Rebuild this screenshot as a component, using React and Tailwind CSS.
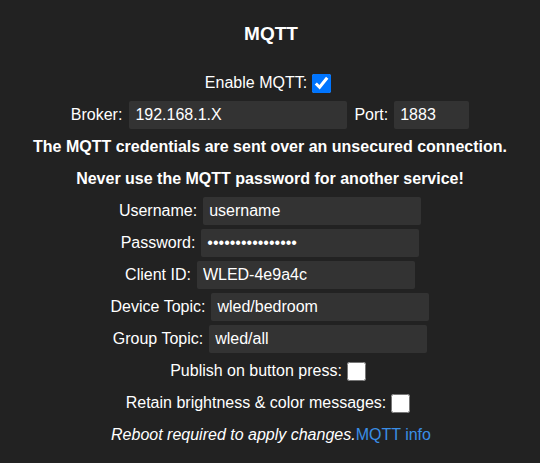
const Field = ({ label, value, type = 'text', width = 'w-[218px]' }) => (
  <div className="h-[32px] flex items-center justify-center">
    <span>{label}</span>
    <input
      type={type}
      defaultValue={value}
      className={`${width} h-[28px] ml-[6px] px-[6px] bg-[#333] text-white rounded-[2px] outline-none`}
    />
  </div>
);

const Check = ({ label, checked }) => (
  <div className="h-[32px] flex items-center justify-center">
    <span>{label}</span>
    <input type="checkbox" defaultChecked={checked} className="w-[19px] h-[19px] m-0 ml-[5px] mr-[4px]" />
  </div>
);

export default function App() {
  return (
    <div
      className="min-h-[463px] pt-[1px] bg-[#222] text-white text-[16px]"
      style={{ fontFamily: '"Liberation Sans", Arial, sans-serif' }}
    >
      {/* Title */}
      <div className="h-[66px] pt-[1px] pl-[2px] flex items-center justify-center">
        <h2 className="text-[19px] font-bold">MQTT</h2>
      </div>

      <Check label="Enable MQTT:" checked />

      <div className="h-[32px] flex items-center justify-center">
        <span>Broker:</span>
        <input
          type="text"
          defaultValue="192.168.1.X"
          className="w-[218px] h-[28px] ml-[7px] px-[6px] bg-[#333] text-white rounded-[2px] outline-none"
        />
        <span className="ml-[7px]">Port:</span>
        <input
          type="text"
          defaultValue="1883"
          className="w-[75px] h-[28px] ml-[6px] px-[6px] bg-[#333] text-white rounded-[2px] outline-none"
        />
      </div>

      <div className="h-[32px] flex items-center justify-center font-bold">
        The MQTT credentials are sent over an unsecured connection.
      </div>
      <div className="h-[32px] flex items-center justify-center font-bold">
        Never use the MQTT password for another service!
      </div>

      <Field label="Username:" value="username" />
      <Field label="Password:" value="passwordpassword" type="password" />
      <Field label="Client ID:" value="WLED-4e9a4c" />
      <Field label="Device Topic:" value="wled/bedroom" />
      <Field label="Group Topic:" value="wled/all" />

      <Check label="Publish on button press:" />
      <Check label="Retain brightness & color messages:" />

      <div className="h-[32px] pl-[2px] flex items-center justify-center">
        <i>Reboot required to apply changes.</i>
        <a href="#" className="text-[#3a8ee6]">MQTT info</a>
      </div>
    </div>
  );
}
